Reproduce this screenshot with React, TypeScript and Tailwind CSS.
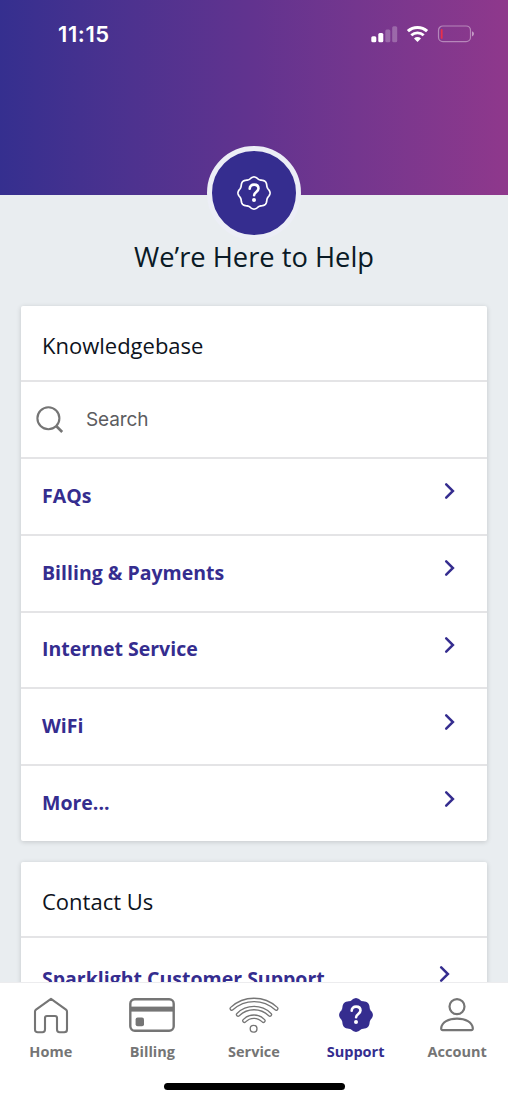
import type { ReactNode } from "react"

type TabItem = {
  label: string
  icon: ReactNode
  active?: boolean
}

const topics = ["FAQs", "Billing & Payments", "Internet Service", "WiFi", "More..."]

// eight soft lobes around a 36x36 box
const badgePoints = Array.from({ length: 144 }, (_, i) => {
  const a = (i / 144) * Math.PI * 2
  const r = 15.2 + 0.85 * Math.cos(a * 8)
  return `${(18 + r * Math.cos(a)).toFixed(2)},${(18 + r * Math.sin(a)).toFixed(2)}`
}).join(" ")

function HelpBadge({ filled }: { filled?: boolean }) {
  return (
    <svg width="36" height="36" viewBox="0 0 36 36" fill="none" className="shrink-0">
      <polygon
        points={badgePoints}
        fill={filled ? "#352d8f" : "none"}
        stroke={filled ? "#352d8f" : "#fff"}
        strokeWidth="1.7"
        strokeLinejoin="round"
      />
      <path
        d="M13.7 13.8c0-2.8 1.9-4.2 4.4-4.2s4.4 1.5 4.4 4c0 3.2-4.4 3.5-4.4 6.6"
        stroke="#fff"
        strokeWidth="2.6"
        strokeLinecap="round"
        strokeLinejoin="round"
      />
      <circle cx="18" cy="24.9" r="2" fill="#fff" />
    </svg>
  )
}

function Chevron() {
  return (
    <svg width="12" height="18" viewBox="0 0 12 18" fill="none" className="shrink-0">
      <path d="M2.2 2.4L8.9 9L2.2 15.6" stroke="#352d8f" strokeWidth="2.5" strokeLinecap="round" strokeLinejoin="miter" />
    </svg>
  )
}

function HomeIcon() {
  return (
    <svg width="36" height="37" viewBox="0 0 36 37" fill="none" stroke="#757575" strokeWidth="2.1" strokeLinejoin="round">
      <path d="M18 1.8L33 12.6Q34 13.4 34 14.6V32.4Q34 35.2 31.2 35.2H26.6Q24 35.2 24 32.6V21Q24 19 22 19H14Q12 19 12 21V32.6Q12 35.2 9.4 35.2H4.8Q2 35.2 2 32.4V14.6Q2 13.4 3 12.6Z" />
    </svg>
  )
}

function CardIcon() {
  return (
    <svg width="46" height="37" viewBox="0 0 46 37" fill="none">
      <rect x="1.3" y="2.2" width="43.4" height="31.6" rx="4.5" stroke="#757575" strokeWidth="2.4" />
      <rect x="1.3" y="9.6" width="43.4" height="5" fill="#757575" />
      <rect x="6.6" y="20.6" width="8.4" height="8.6" rx="2" fill="#757575" />
    </svg>
  )
}

// each band is a thick grey arc with a thinner white arc on top
function ServiceIcon() {
  const arcs = [
    "M2.8 11.6A32.7 32.7 0 0 1 47.2 11.6",
    "M9.1 17.6A22.7 22.7 0 0 1 40.9 17.6",
    "M15.4 23.8A12.9 12.9 0 0 1 34.4 23.8",
  ]
  return (
    <svg width="50" height="37" viewBox="0 0 50 37" fill="none" strokeLinecap="round">
      {arcs.map(d => (
        <g key={d}>
          <path d={d} stroke="#757575" strokeWidth="4.6" />
          <path d={d} stroke="#fff" strokeWidth="2" />
        </g>
      ))}
      <circle cx="24.6" cy="31.8" r="3.4" stroke="#757575" strokeWidth="1.3" />
    </svg>
  )
}

function AccountIcon() {
  return (
    <svg width="36" height="37" viewBox="0 0 36 37" fill="none" stroke="#757575" strokeWidth="2.2" strokeLinejoin="round">
      <circle cx="18" cy="9.6" r="7.5" />
      <path d="M2.2 31.2C2.8 25.2 9.4 21.6 18 21.6S33.2 25.2 33.8 31.2Q33.9 33.2 32.3 33.2H3.7Q2.1 33.2 2.2 31.2Z" />
    </svg>
  )
}

const tabs: TabItem[] = [
  { label: "Home", icon: <HomeIcon /> },
  { label: "Billing", icon: <CardIcon /> },
  { label: "Service", icon: <ServiceIcon /> },
  { label: "Support", icon: <HelpBadge filled />, active: true },
  { label: "Account", icon: <AccountIcon /> },
]

function StatusBar() {
  return (
    <div className="flex items-center justify-between pt-[20px] pr-[33px] pl-[58px]">
      <span className="font-['Inter',sans-serif] text-[22px] leading-7 font-semibold tracking-[0.6px] text-white">11:15</span>
      <svg width="104" height="20" viewBox="0 0 104 20" fill="none">
        <rect x="0.3" y="12.2" width="5" height="6" rx="1.5" fill="#fff" />
        <rect x="7.3" y="9" width="5" height="9.2" rx="1.5" fill="#fff" />
        <rect x="14.3" y="5.4" width="5" height="12.8" rx="1.5" fill="#fff" fillOpacity="0.25" />
        <rect x="21.2" y="2.2" width="5" height="16" rx="1.5" fill="#fff" fillOpacity="0.25" />
        <path d="M36.9 7.2A14 14 0 0 1 56.1 7.2" stroke="#fff" strokeWidth="3" />
        <path d="M40.3 11.2A9.2 9.2 0 0 1 52.7 11.2" stroke="#fff" strokeWidth="2.8" />
        <path d="M46.5 18L43 14.4A5 5 0 0 1 50 14.4Z" fill="#fff" />
        <rect x="67.5" y="2" width="32" height="15.6" rx="4.4" stroke="#fff" strokeOpacity="0.4" strokeWidth="1.2" />
        <rect x="69.8" y="5" width="1.8" height="9.8" rx="0.9" fill="#e8304a" />
        <path d="M101 7.2Q103 8 103 9.8T101 12.4Z" fill="#fff" fillOpacity="0.5" />
      </svg>
    </div>
  )
}

export default function App() {
  return (
    <div className="relative flex h-[1100px] w-[508px] flex-col overflow-hidden bg-[#e9edf0] font-['Open_Sans',sans-serif]">
      <header className="h-[195px] shrink-0 bg-linear-to-r from-[#352f8f] via-[#62338f] to-[#8f388c]">
        <StatusBar />
      </header>

      <main className="flex min-h-0 flex-1 flex-col overflow-hidden px-[21px]">
        <h1 className="mt-[42px] h-10 shrink-0 text-center text-[27.3px] leading-10 text-[#0a1a26]">
          We’re Here to Help
        </h1>

        <section className="mt-[29px] shrink-0 rounded-[2px] bg-white shadow-[0_1px_5px_rgba(0,0,0,0.16)]">
          <div className="flex h-[76px] items-center border-b-2 border-[#e4e4e6] px-[21px] pt-1 text-[22px] text-[#0d1320]">
            Knowledgebase
          </div>
          <div className="flex h-[77px] items-center gap-[22px] border-b-2 border-[#e4e4e6] pl-[15px]">
            <svg width="28" height="28" viewBox="0 0 28 28" fill="none" stroke="#757575" strokeWidth="2.1">
              <circle cx="12.4" cy="12.2" r="11" />
              <path d="M20.2 20L26.2 26" strokeWidth="2.6" />
            </svg>
            <span className="pt-px font-['Inter',sans-serif] text-[19px] tracking-[-0.1px] text-[#5c5c60]">Search</span>
          </div>
          {topics.map(topic => (
            <div
              key={topic}
              className="flex h-[76.8px] items-center justify-between border-b-2 border-[#e4e4e6] pr-[31px] pb-[2px] pl-[21px] last:h-[75px] last:border-b-0"
            >
              <span className="text-[19.5px] font-bold text-[#352d8f]">{topic}</span>
              <span className="pb-[8px]">
                <Chevron />
              </span>
            </div>
          ))}
        </section>

        <section className="mt-[21px] shrink-0 rounded-[2px] bg-white shadow-[0_1px_5px_rgba(0,0,0,0.16)]">
          <div className="flex h-[76px] items-center border-b-2 border-[#e4e4e6] px-[21px] pt-1 text-[22px] text-[#0d1320]">
            Contact Us
          </div>
          <div className="flex h-[80px] items-center justify-between pr-[36px] pl-[21px]">
            <span className="text-[19.5px] font-bold text-[#352d8f]">Sparklight Customer Support</span>
            <span className="pb-[8px]">
              <Chevron />
            </span>
          </div>
        </section>
      </main>

      <nav className="flex h-[118px] shrink-0 flex-col items-center border-t border-[#ececee] bg-white">
        <div className="grid h-[86px] w-full grid-cols-5 pt-[14px]">
          {tabs.map(tab => (
            <div key={tab.label} className="flex flex-col items-center">
              <div className="flex h-[37px] items-start">{tab.icon}</div>
              <span
                className={
                  tab.active
                    ? "mt-[8px] text-[14.5px] leading-5 font-bold text-[#352d8f]"
                    : "mt-[8px] text-[14.5px] leading-5 font-bold text-[#757575]"
                }
              >
                {tab.label}
              </span>
            </div>
          ))}
        </div>
        <div className="mt-[14px] h-[7px] w-[181px] rounded-full bg-black" />
      </nav>

      {/* round badge overlapping the banner edge */}
      <div className="absolute top-[146px] left-1/2 flex size-[94px] -translate-x-1/2 items-center justify-center rounded-full border-[5px] border-[#eceef6] bg-[#352d8f]">
        <HelpBadge />
      </div>
    </div>
  )
}
